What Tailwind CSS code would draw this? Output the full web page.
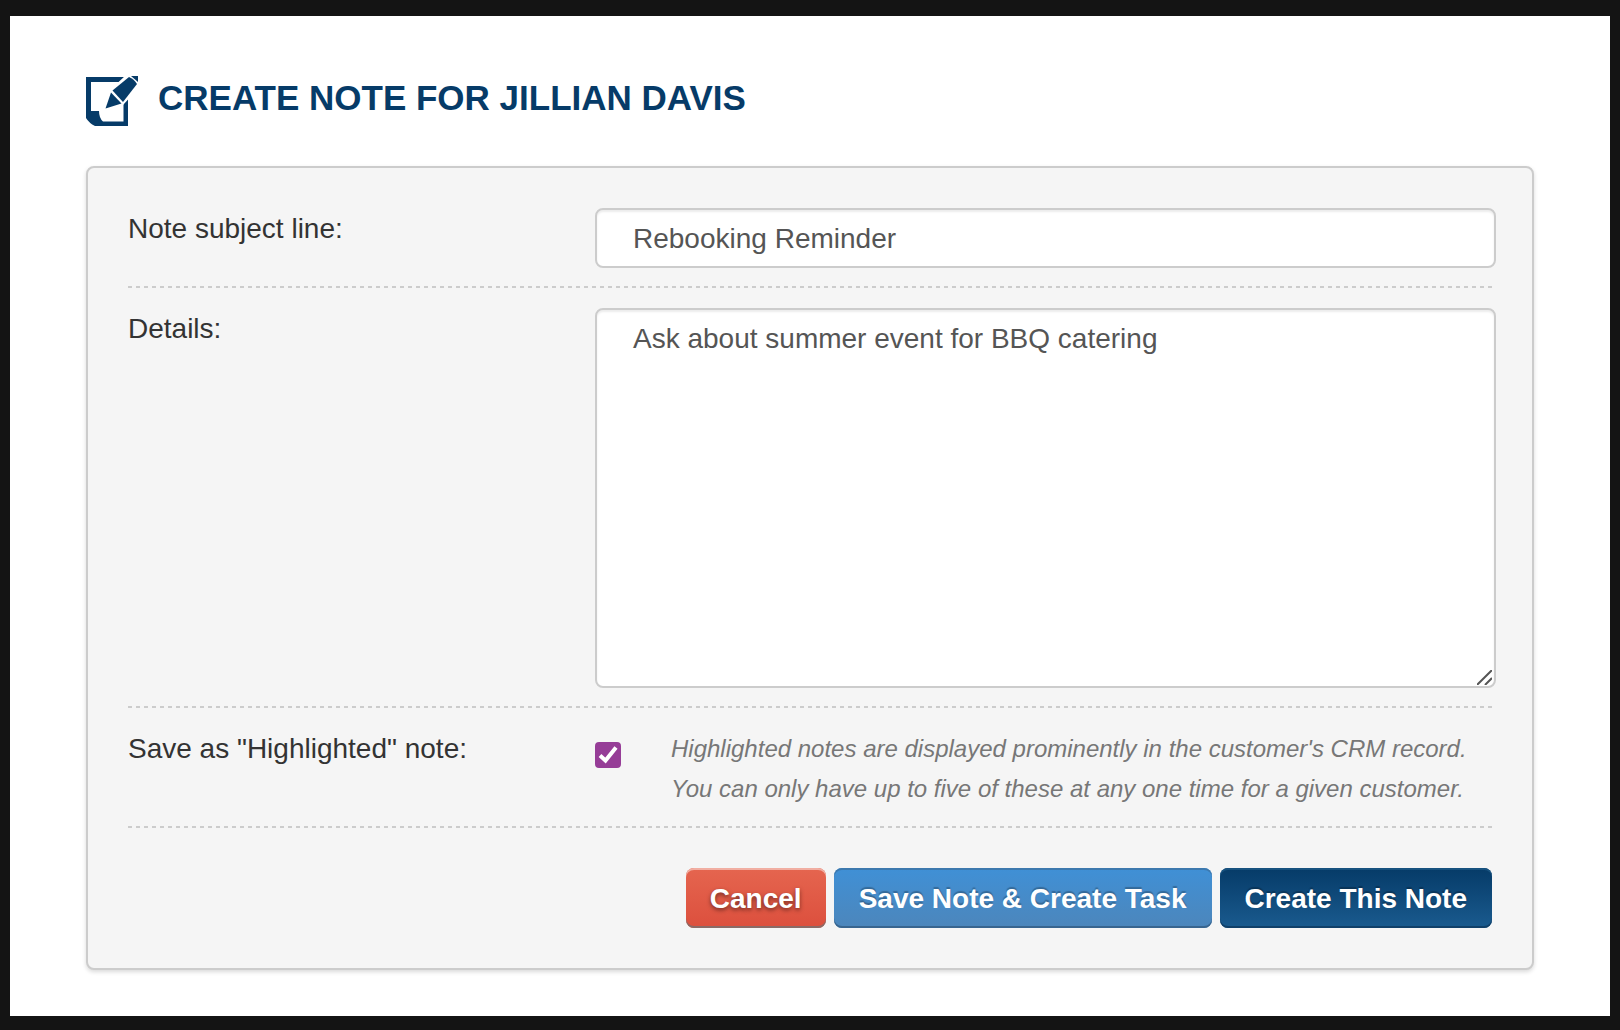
<!DOCTYPE html>
<html lang="en">
<head>
<meta charset="utf-8">
<meta name="viewport" content="width=device-width, initial-scale=1">
<title>Create Note for Jillian Davis</title>
<script src="https://cdn.jsdelivr.net/npm/@tailwindcss/browser@4"></script>
</head>
<body class="min-h-screen bg-[#141414] px-[10px] pt-4 pb-[14px] font-['Liberation_Sans',Arial,sans-serif] text-[28px] leading-10 text-[#333]">
<main class="bg-white px-[76px] pt-[60px] pb-[46px]">
  <header class="flex items-start gap-5">
    <svg class="h-[50px] w-[52px] shrink-0" viewBox="0 0 52 50" aria-hidden="true">
      <path fill="#063b68" fill-rule="evenodd" d="M0 1H42V50H9Q3 47 0 42ZM5 6V35H13Q13 42 17 45.500H37.500V6Z"/>
      <path fill="#fff" d="M39 0H52V13L43 22.500L37 29L24 14Z"/>
      <path fill="#063b68" d="M45 0H52V6Z"/>
      <path fill="#063b68" d="M26.500 14.500L43 1Q48 3 51 8L37 26Z"/>
      <path fill="#063b68" d="M25 16.500L35.500 27.500L19.500 32.500Z"/>
    </svg>
    <h1 class="text-[35px] leading-[44px] font-bold text-[#063b68] uppercase">Create Note for Jillian Davis</h1>
  </header>

  <form class="mt-10 rounded-lg border-2 border-[#ccc] bg-[#f5f5f5] p-10 shadow-[0_2px_4px_rgba(0,0,0,0.15)]">
    <div class="flex pb-[18px]">
      <label for="subject" class="w-[467px] shrink-0 leading-[42px]">Note subject line:</label>
      <input id="subject" type="text" value="Rebooking Reminder" class="-mr-1 h-[60px] min-w-0 flex-1 rounded-lg border-2 border-[#ccc] bg-white px-9 pt-[2px] text-[#555] shadow-[inset_0_2px_2px_rgba(0,0,0,0.075)]">
    </div>
    <div class="h-[2px] bg-[repeating-linear-gradient(90deg,#ccc_0_4px,transparent_4px_8px)]"></div>

    <div class="flex pt-5 pb-[18px]">
      <label for="details" class="w-[467px] shrink-0 leading-[42px]">Details:</label>
      <div class="relative -mr-1 flex min-w-0 flex-1">
        <textarea id="details" class="h-[380px] w-full resize-none rounded-lg border-2 border-[#ccc] bg-white px-9 py-[9px] text-[#555] shadow-[inset_0_2px_2px_rgba(0,0,0,0.075)]">Ask about summer event for BBQ catering</textarea>
        <svg class="pointer-events-none absolute right-1 bottom-[3px] h-[15px] w-[15px]" viewBox="0 0 15 15" fill="none" stroke="#555" stroke-width="2" aria-hidden="true">
          <path d="M0 15L15 0M8 15L15 8"/>
        </svg>
      </div>
    </div>
    <div class="h-[2px] bg-[repeating-linear-gradient(90deg,#ccc_0_4px,transparent_4px_8px)]"></div>

    <div class="flex pt-[21px] pb-[17px]">
      <label for="highlight" class="w-[467px] shrink-0">Save as "Highlighted" note:</label>
      <div class="relative mt-[13px] h-[26px] w-[26px] shrink-0">
        <input id="highlight" type="checkbox" checked aria-describedby="highlight-help" class="peer block h-[26px] w-[26px] appearance-none rounded-[4px] border-2 border-[#963d97] bg-white checked:bg-[#963d97]">
        <svg class="pointer-events-none absolute inset-0 hidden peer-checked:block" viewBox="0 0 26 26" fill="none" stroke="#fff" stroke-width="4" aria-hidden="true">
          <path d="M5 13.500L10.500 18.500L21 5.500"/>
        </svg>
      </div>
      <p id="highlight-help" class="ml-[50px] text-[24px] text-[#777] italic">Highlighted notes are displayed prominently in the customer's CRM record.<br>You can only have up to five of these at any one time for a given customer.</p>
    </div>
    <div class="h-[2px] bg-[repeating-linear-gradient(90deg,#ccc_0_4px,transparent_4px_8px)]"></div>

    <div class="flex justify-end gap-2 pt-10 font-bold whitespace-nowrap text-white">
      <button type="button" class="h-[60px] rounded-lg bg-linear-to-b from-[#e5654f] to-[#dc4f3d] px-6 pt-[2px] shadow-[inset_0_2px_0_#f1aea2,inset_0_-2px_0_#8a6a66] text-shadow-[0_2px_4px_rgb(0_0_0/0.5)]">Cancel</button>
      <button type="button" class="h-[60px] rounded-lg bg-linear-to-b from-[#3f90d6] to-[#4c86bb] px-[25px] pt-[2px] shadow-[inset_0_2px_0_#3d79ae,inset_0_-2px_0_#38658f] text-shadow-[0_-2px_1px_rgb(0_0_0/0.25)]">Save Note &amp; Create Task</button>
      <button type="submit" class="h-[60px] rounded-lg bg-linear-to-b from-[#063b68] to-[#1a5b8f] px-[25px] pt-[2px] shadow-[inset_0_2px_0_#17527f,inset_0_-2px_0_#104069] text-shadow-[0_-2px_1px_rgb(0_0_0/0.25)]">Create This Note</button>
    </div>
  </form>
</main>
</body>
</html>
